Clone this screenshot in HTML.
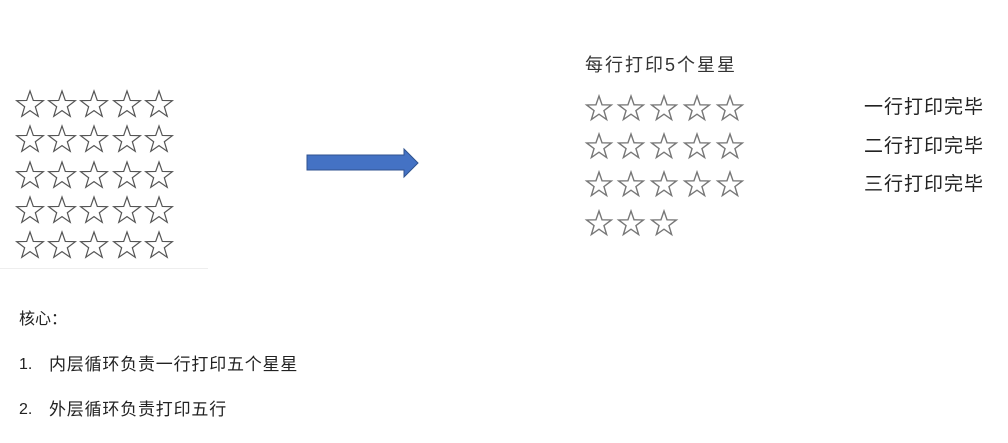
<!DOCTYPE html>
<html><head><meta charset="utf-8"><style>
body{margin:0;width:1008px;height:443px;background:#fff;position:relative;overflow:hidden;font-family:"Liberation Sans","Noto Sans CJK SC",sans-serif;color:#222}
.t{position:absolute;white-space:nowrap;line-height:1}
.l{left:864px;font-size:19px;color:#222;letter-spacing:1px}
</style></head><body>
<svg width="1008" height="443" style="position:absolute;left:0;top:0">
<defs>
<polygon id="s" points="0,-14 3.29,-4.53 13.31,-4.33 5.33,1.73 8.23,11.33 0,5.6 -8.23,11.33 -5.33,1.73 -13.31,-4.33 -3.29,-4.53" fill="none" stroke="#555" stroke-width="1.2" stroke-linejoin="miter"/>
<polygon id="r" points="0,-13 3.05,-4.2 12.36,-4.02 4.95,1.6 7.64,10.52 0,5.2 -7.64,10.52 -4.95,1.6 -12.36,-4.02 -3.05,-4.2" fill="none" stroke="#777" stroke-width="1.4"/>
</defs>
<g>
<use href="#s" x="30" y="105"/><use href="#s" x="62" y="105"/><use href="#s" x="94" y="105"/><use href="#s" x="127" y="105"/><use href="#s" x="159" y="105"/>
<use href="#s" x="30" y="140"/><use href="#s" x="62" y="140"/><use href="#s" x="94" y="140"/><use href="#s" x="127" y="140"/><use href="#s" x="159" y="140"/>
<use href="#s" x="30" y="176"/><use href="#s" x="62" y="176"/><use href="#s" x="94" y="176"/><use href="#s" x="127" y="176"/><use href="#s" x="159" y="176"/>
<use href="#s" x="30" y="211"/><use href="#s" x="62" y="211"/><use href="#s" x="94" y="211"/><use href="#s" x="127" y="211"/><use href="#s" x="159" y="211"/>
<use href="#s" x="30" y="246"/><use href="#s" x="62" y="246"/><use href="#s" x="94" y="246"/><use href="#s" x="127" y="246"/><use href="#s" x="159" y="246"/>
</g>
<line x1="0" y1="268.5" x2="208" y2="268.5" stroke="#eee"/>
<polygon points="307,155 404,155 404,149 418,163 404,177 404,170 307,170" fill="#4472c4" stroke="#2f528f" stroke-width="1"/>
<g>
<use href="#r" x="599" y="109"/><use href="#r" x="631" y="109"/><use href="#r" x="664" y="109"/><use href="#r" x="697" y="109"/><use href="#r" x="730" y="109"/>
<use href="#r" x="599" y="147"/><use href="#r" x="631" y="147"/><use href="#r" x="664" y="147"/><use href="#r" x="697" y="147"/><use href="#r" x="730" y="147"/>
<use href="#r" x="599" y="185"/><use href="#r" x="631" y="185"/><use href="#r" x="664" y="185"/><use href="#r" x="697" y="185"/><use href="#r" x="730" y="185"/>
<use href="#r" x="599" y="224"/><use href="#r" x="631" y="224"/><use href="#r" x="664" y="224"/>
</g>
</svg>
<div class="t" style="left:585px;top:56px;font-size:18px;color:#333;letter-spacing:2px">每行打印5个星星</div>
<div class="t l" style="top:98px">一行打印完毕</div>
<div class="t l" style="top:137px">二行打印完毕</div>
<div class="t l" style="top:175px">三行打印完毕</div>
<div class="t" style="left:19px;top:312px;font-size:16px">核心：</div>
<div class="t" style="left:19px;top:357px;font-size:16px">1.</div>
<div class="t" style="left:49px;top:356px;font-size:17px;letter-spacing:0.8px">内层循环负责一行打印五个星星</div>
<div class="t" style="left:19px;top:402px;font-size:16px">2.</div>
<div class="t" style="left:49px;top:401px;font-size:17px;letter-spacing:0.8px">外层循环负责打印五行</div>
</body></html>
